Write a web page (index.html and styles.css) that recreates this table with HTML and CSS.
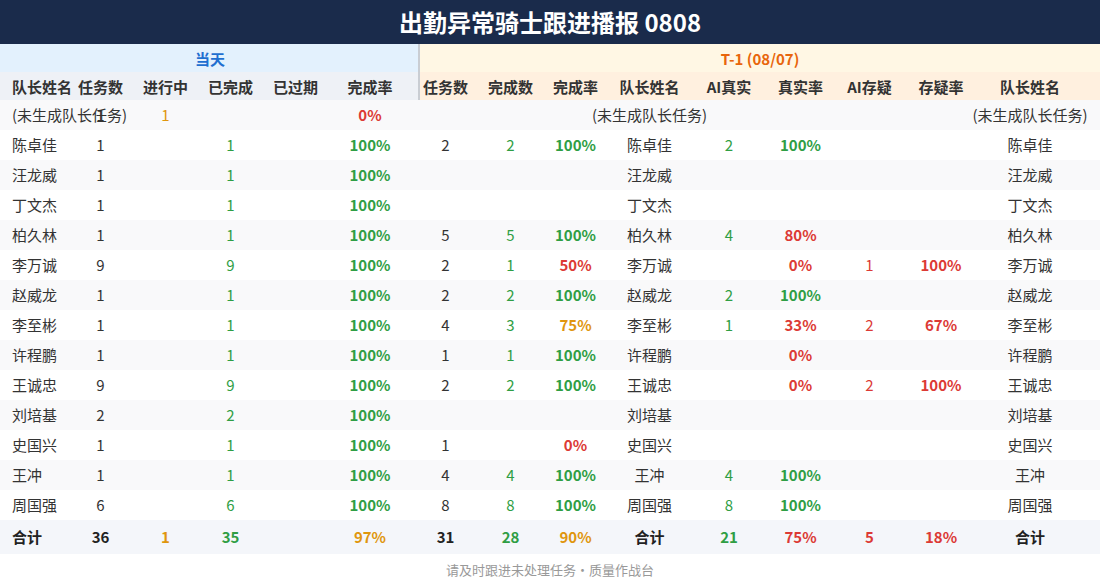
FILE: index.html
```html
<!DOCTYPE html>
<html lang="zh-CN">
<head>
<meta charset="utf-8">
<title>出勤异常骑士跟进播报 0808</title>
<link rel="stylesheet" href="styles.css">
</head>
<body>
<div class="page">
  <header class="title-bar">出勤异常骑士跟进播报 0808</header>
  <table class="report">
    <colgroup>
      <col class="w-name"><col class="w-a"><col class="w-a"><col class="w-a"><col class="w-a"><col class="w-rate">
      <col class="w-t1"><col class="w-t2"><col class="w-t3"><col class="w-t4"><col class="w-t5"><col class="w-t6"><col class="w-t7"><col class="w-t8"><col class="w-t9">
    </colgroup>
    <thead>
      <tr class="group-row">
        <th colspan="6" class="group today">当天</th>
        <th colspan="9" class="group t1">T-1 (08/07)</th>
      </tr>
      <tr class="head-row">
        <th class="left name">队长姓名</th>
        <th class="left">任务数</th>
        <th class="left">进行中</th>
        <th class="left">已完成</th>
        <th class="left">已过期</th>
        <th class="left rate-col split">完成率</th>
        <th class="right">任务数</th>
        <th class="right">完成数</th>
        <th class="right">完成率</th>
        <th class="right">队长姓名</th>
        <th class="right">AI真实</th>
        <th class="right">真实率</th>
        <th class="right">AI存疑</th>
        <th class="right">存疑率</th>
        <th class="right last-col">队长姓名</th>
      </tr>
    </thead>
    <tbody>
      <tr class="stripe">
        <td class="name">(未生成队长任务)</td><td>1</td><td class="orange">1</td><td></td><td></td><td class="rate-col b red">0%</td>
        <td></td><td></td><td></td><td><span class="wide">(未生成队长任务)</span></td><td></td><td></td><td></td><td></td><td class="last-col"><span class="wide">(未生成队长任务)</span></td>
      </tr>
      <tr>
        <td class="name">陈卓佳</td><td>1</td><td></td><td class="green">1</td><td></td><td class="rate-col b green">100%</td>
        <td>2</td><td class="green">2</td><td class="b green">100%</td><td>陈卓佳</td><td class="green">2</td><td class="b green">100%</td><td></td><td></td><td class="last-col">陈卓佳</td>
      </tr>
      <tr class="stripe">
        <td class="name">汪龙威</td><td>1</td><td></td><td class="green">1</td><td></td><td class="rate-col b green">100%</td>
        <td></td><td></td><td></td><td>汪龙威</td><td></td><td></td><td></td><td></td><td class="last-col">汪龙威</td>
      </tr>
      <tr>
        <td class="name">丁文杰</td><td>1</td><td></td><td class="green">1</td><td></td><td class="rate-col b green">100%</td>
        <td></td><td></td><td></td><td>丁文杰</td><td></td><td></td><td></td><td></td><td class="last-col">丁文杰</td>
      </tr>
      <tr class="stripe">
        <td class="name">柏久林</td><td>1</td><td></td><td class="green">1</td><td></td><td class="rate-col b green">100%</td>
        <td>5</td><td class="green">5</td><td class="b green">100%</td><td>柏久林</td><td class="green">4</td><td class="b red">80%</td><td></td><td></td><td class="last-col">柏久林</td>
      </tr>
      <tr>
        <td class="name">李万诚</td><td>9</td><td></td><td class="green">9</td><td></td><td class="rate-col b green">100%</td>
        <td>2</td><td class="green">1</td><td class="b red">50%</td><td>李万诚</td><td></td><td class="b red">0%</td><td class="red">1</td><td class="b red">100%</td><td class="last-col">李万诚</td>
      </tr>
      <tr class="stripe">
        <td class="name">赵威龙</td><td>1</td><td></td><td class="green">1</td><td></td><td class="rate-col b green">100%</td>
        <td>2</td><td class="green">2</td><td class="b green">100%</td><td>赵威龙</td><td class="green">2</td><td class="b green">100%</td><td></td><td></td><td class="last-col">赵威龙</td>
      </tr>
      <tr>
        <td class="name">李至彬</td><td>1</td><td></td><td class="green">1</td><td></td><td class="rate-col b green">100%</td>
        <td>4</td><td class="green">3</td><td class="b orange">75%</td><td>李至彬</td><td class="green">1</td><td class="b red">33%</td><td class="red">2</td><td class="b red">67%</td><td class="last-col">李至彬</td>
      </tr>
      <tr class="stripe">
        <td class="name">许程鹏</td><td>1</td><td></td><td class="green">1</td><td></td><td class="rate-col b green">100%</td>
        <td>1</td><td class="green">1</td><td class="b green">100%</td><td>许程鹏</td><td></td><td class="b red">0%</td><td></td><td></td><td class="last-col">许程鹏</td>
      </tr>
      <tr>
        <td class="name">王诚忠</td><td>9</td><td></td><td class="green">9</td><td></td><td class="rate-col b green">100%</td>
        <td>2</td><td class="green">2</td><td class="b green">100%</td><td>王诚忠</td><td></td><td class="b red">0%</td><td class="red">2</td><td class="b red">100%</td><td class="last-col">王诚忠</td>
      </tr>
      <tr class="stripe">
        <td class="name">刘培基</td><td>2</td><td></td><td class="green">2</td><td></td><td class="rate-col b green">100%</td>
        <td></td><td></td><td></td><td>刘培基</td><td></td><td></td><td></td><td></td><td class="last-col">刘培基</td>
      </tr>
      <tr>
        <td class="name">史国兴</td><td>1</td><td></td><td class="green">1</td><td></td><td class="rate-col b green">100%</td>
        <td>1</td><td></td><td class="b red">0%</td><td>史国兴</td><td></td><td></td><td></td><td></td><td class="last-col">史国兴</td>
      </tr>
      <tr class="stripe">
        <td class="name">王冲</td><td>1</td><td></td><td class="green">1</td><td></td><td class="rate-col b green">100%</td>
        <td>4</td><td class="green">4</td><td class="b green">100%</td><td>王冲</td><td class="green">4</td><td class="b green">100%</td><td></td><td></td><td class="last-col">王冲</td>
      </tr>
      <tr>
        <td class="name">周国强</td><td>6</td><td></td><td class="green">6</td><td></td><td class="rate-col b green">100%</td>
        <td>8</td><td class="green">8</td><td class="b green">100%</td><td>周国强</td><td class="green">8</td><td class="b green">100%</td><td></td><td></td><td class="last-col">周国强</td>
      </tr>
    </tbody>
    <tfoot>
      <tr class="total-row">
        <td class="name">合计</td><td>36</td><td class="orange">1</td><td class="green">35</td><td></td><td class="rate-col orange">97%</td>
        <td>31</td><td class="green">28</td><td class="orange">90%</td><td>合计</td><td class="green">21</td><td class="red">75%</td><td class="red">5</td><td class="red">18%</td><td class="last-col">合计</td>
      </tr>
    </tfoot>
  </table>
  <footer class="foot-note">请及时跟进未处理任务·质量作战台</footer>
</div>
</body>
</html>
```

FILE: styles.css
```css
html, body {
  margin: 0;
  padding: 0;
  background: #ffffff;
}

body {
  font-family: "Noto Sans CJK SC", "Noto Sans", sans-serif;
  color: #333333;
  width: 1100px;
}

.page {
  display: flex;
  flex-direction: column;
  width: 1100px;
}

.title-bar {
  height: 44px;
  line-height: 44px;
  background: #1a2b4b;
  color: #ffffff;
  font-size: 24px;
  font-weight: 700;
  text-align: center;
}

.report {
  width: 1100px;
  table-layout: fixed;
  border-collapse: collapse;
  border-spacing: 0;
  font-size: 15px;
}

.w-name { width: 68px; }
.w-a { width: 65px; }
.w-rate { width: 92px; }
.w-t1 { width: 51px; }
.w-t2 { width: 79px; }
.w-t3 { width: 51px; }
.w-t4 { width: 97px; }
.w-t5 { width: 62px; }
.w-t6 { width: 81px; }
.w-t7 { width: 57px; }
.w-t8 { width: 86px; }
.w-t9 { width: 116px; }

.report th,
.report td {
  padding: 0;
  text-align: center;
  vertical-align: middle;
  white-space: nowrap;
  overflow: visible;
}

.wide {
  display: inline-block;
  margin: 0 -40px;
}

.group-row th {
  height: 28px;
  font-size: 15px;
  font-weight: 700;
}

.group.today {
  background: #e3f1fd;
  color: #1f6fd0;
  box-shadow: inset -2px 0 0 #c9cdd3;
}

.group.t1 {
  background: #fff7e4;
  color: #e8650c;
}

.head-row th {
  height: 28px;
  font-weight: 700;
  color: #333333;
}

.head-row th.left {
  background: #eef1f6;
}

.head-row th.right {
  background: #fff0df;
}

.head-row th.split {
  box-shadow: inset -2px 0 0 #c9cdd3;
}

.report th.name,
.report td.name {
  text-align: left;
  padding-left: 12px;
}

.report .rate-col {
  padding-right: 8px;
}

.report .last-col {
  padding-right: 24px;
}

.report tbody td {
  height: 29px;
  padding-bottom: 1px;
}

.report tbody tr.stripe td {
  background: #f9f9fa;
}

.total-row td {
  height: 33px;
  padding-bottom: 1px;
  background: #f4f6fa;
  font-weight: 700;
  color: #222222;
}

.b {
  font-weight: 700;
}

.green { color: #2f9e44 !important; }
.red { color: #dc3a35 !important; }
.orange { color: #e0960e !important; }

.foot-note {
  height: 32px;
  line-height: 31px;
  text-align: center;
  font-size: 13px;
  color: #999999;
}
```
